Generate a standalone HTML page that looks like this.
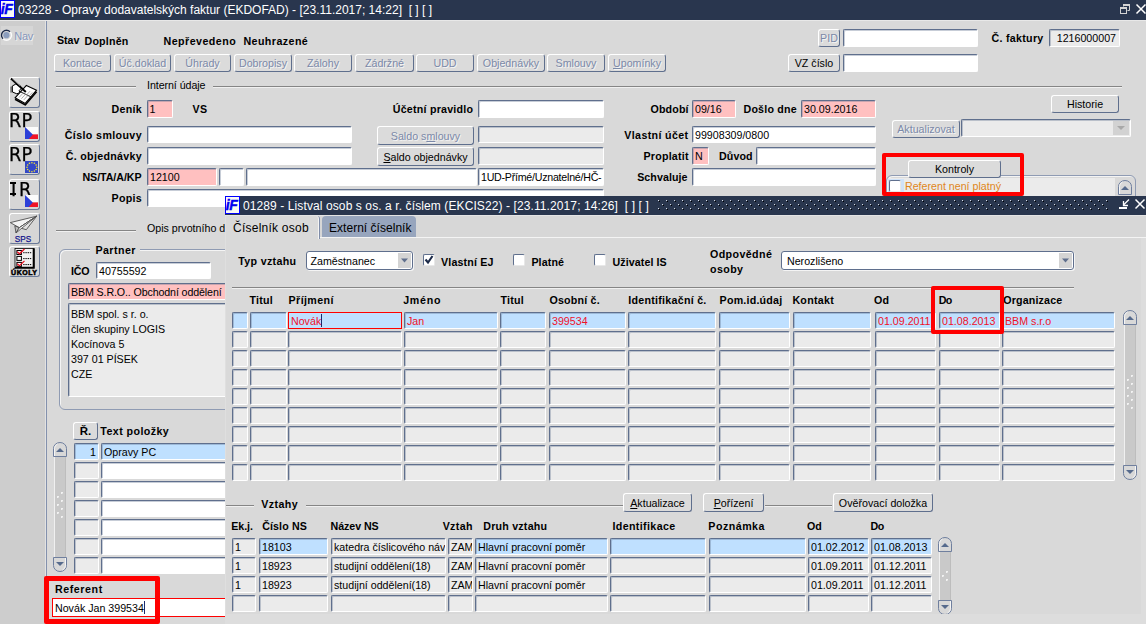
<!DOCTYPE html>
<html lang="cs"><head><meta charset="utf-8"><title>Opravy dodavatelských faktur</title><style>
html,body{margin:0;padding:0;}
body{width:1146px;height:624px;overflow:hidden;background:#d9d9d9;font-family:"Liberation Sans",sans-serif;font-size:10.67px;position:relative;}
.a,.f,.b,.t,.hl,.cb,.rr,.ib{position:absolute;box-sizing:border-box;}
.f{border:1px solid;border-color:#5f6f8d #fff #fff #5f6f8d;border-radius:2px;padding-left:2px;white-space:nowrap;overflow:hidden;font-size:10.67px;box-shadow:inset 1px 1px 0 rgba(95,111,141,0.35);}
.b{border:1px solid;border-color:#fff #5f6f8d #5f6f8d #fff;border-radius:3px;text-align:center;white-space:nowrap;font-size:10.67px;background:#dbdbdb;color:#000;overflow:hidden;}
.b.dis{color:#7b89a8;text-shadow:1px 1px 0 #f4f4f4;}
.t{white-space:nowrap;}
.ttl{color:#fff;font-size:12px;line-height:17px;}
.hl{height:2px;border-top:1px solid #858585;border-bottom:1px solid #f0f0f0;}
.cb{width:12px;height:12px;background:#fff;border:1px solid;border-color:#5f6f8d #e8e8e8 #e8e8e8 #5f6f8d;border-radius:2px;}
.rr{border:3px solid #ff0000;border-radius:2px;}
.ib{width:31px;height:31px;border:1px solid;border-color:#fff #6a7a98 #6a7a98 #fff;border-radius:3px;background:#d6d6d6;}
.big{font-family:"DejaVu Sans Condensed","DejaVu Sans","Liberation Sans",sans-serif;font-size:18.600px;line-height:20px;letter-spacing:0.2px;transform:scaleX(1.06);transform-origin:0 0;-webkit-text-stroke:0.250px #000;}
.cur{display:inline-block;width:1px;height:13px;background:#1a2a6c;vertical-align:-2px;}
u{text-decoration:underline;}
</style></head><body>
<div class="a" style="left:0px;top:0px;width:1146px;height:20px;background:#29364e;"></div>
<div class="a" style="left:0px;top:20px;width:1146px;height:1px;background:#e8e8e8;"></div>
<svg class="a" style="left:0;top:0" width="15" height="18" viewBox="0 0 15 18"><rect x="0.500" y="0.500" width="14" height="17" fill="#fafaf4" stroke="#0000ff"/><text x="0.800" y="14.300" font-family="Liberation Sans, sans-serif" font-style="italic" font-weight="bold" font-size="14" fill="#0000f0" stroke="#0000f0" stroke-width="0.400" letter-spacing="-0.500">iF</text></svg>
<div class="t ttl" style="left:18px;top:2px;">03228 - Opravy dodavatelských faktur (EKDOFAD) - [23.11.2017; 14:22]&nbsp; [ ] [ ]</div>
<svg class="a" style="left:1116px;top:0px" width="30" height="20" viewBox="0 0 30 20"><g fill="none" stroke="#d4d4d4" stroke-width="1"><path d="M7.500 6.500v-2h6v6h-2"/><path d="M7 5h7" stroke-width="2"/><rect x="4.500" y="7.500" width="6" height="6"/><path d="M4 8h7" stroke-width="2"/></g><path d="M20.500 4.500l9 9M29.500 4.500l-9 9" stroke="#fff" stroke-width="1.500"/></svg>
<div class="a" style="left:0px;top:21px;width:45px;height:603px;background:#cdcdcd;"></div>
<div class="a" style="left:45px;top:21px;width:1px;height:603px;background:#e2e2e2;"></div>
<div class="a" style="left:46px;top:21px;width:1px;height:603px;background:#8391ad;"></div>
<div class="a" style="left:1px;top:26px;width:32px;height:19px;background:#d6d6d6;"></div>
<svg class="a" style="left:0px;top:29px" width="14" height="13" viewBox="0 0 14 13"><circle cx="6.500" cy="6.300" r="5" fill="#d8d8d8" stroke="#fbfbfb" stroke-width="1.400"/><path d="M2.960 9.840A5 5 0 0 1 10.040 2.760" fill="none" stroke="#1c2a48" stroke-width="1.400"/><circle cx="6.400" cy="6.200" r="3.100" fill="#8b9dbd"/></svg>
<div class="t" style="left:14.3px;top:28.5px;font-size:11px;line-height:14px;color:#8797bb;text-shadow:1px 1px 0 #f0f0f0;letter-spacing:-0.320px;">Nav</div>
<div class="ib" style="left:9px;top:77px;"></div>
<div class="ib" style="left:9px;top:111px;"></div>
<div class="ib" style="left:9px;top:144px;"></div>
<div class="ib" style="left:9px;top:179px;"></div>
<div class="ib" style="left:9px;top:213px;"></div>
<div class="ib" style="left:9px;top:246px;"></div>
<svg class="a" style="left:9px;top:77px" width="31" height="31" viewBox="0 0 31 31"><path d="M6 22.300L16.200 27.900L27.600 14.700" fill="none" stroke="#000" stroke-width="1.600" stroke-linejoin="round"/><path d="M6 20.800L17.400 8.400L27.600 13.200L16.200 26.400z" fill="#fdfdfd" stroke="#000" stroke-width="1.100" stroke-linejoin="round"/><path d="M11.500 14.800L21.800 19.800" stroke="#000" stroke-width="0.900"/><path d="M10 20.500l4-4.300M12.400 21.700l4-4.300M14.800 22.900l4-4.300M17.500 18l3.500-3.800M19.800 19.200l3.500-3.800" stroke="#9a9a9a" stroke-width="0.800"/><rect x="1.200" y="9.600" width="2.200" height="6" fill="#808080"/><path d="M3.300 9L6.600 7.200L10.800 8.400L12.200 11.400L10.200 13.600L10.800 15.600L7.800 16.800L3.400 15z" fill="#fff" stroke="#000" stroke-width="1" stroke-linejoin="round"/><path d="M2 1.400L16.800 15" stroke="#000" stroke-width="2"/><path d="M3.200 1.600L11 8.800" stroke="#cfcfcf" stroke-width="0.600"/></svg>
<div class="t big" style="left:8.800px;top:111px;">RP</div>
<svg class="a" style="left:25px;top:127px" width="13" height="12" viewBox="0 0 13 12"><rect width="13" height="7.400" fill="#fcfcfc"/><rect y="7.400" width="13" height="4.600" fill="#f01428"/><path d="M0 0L7.800 7.400L3.800 12L0 12z" fill="#2c40d8"/></svg>
<div class="t big" style="left:8.800px;top:145px;">RP</div>
<svg class="a" style="left:25px;top:161px" width="13" height="12" viewBox="0 0 13 12"><rect width="13" height="12" fill="#3248c8"/><circle cx="11.80" cy="6.20" r="0.800" fill="#f6e22a"/><circle cx="11.14" cy="8.45" r="0.800" fill="#f6e22a"/><circle cx="9.35" cy="10.10" r="0.800" fill="#f6e22a"/><circle cx="6.90" cy="10.70" r="0.800" fill="#f6e22a"/><circle cx="4.45" cy="10.10" r="0.800" fill="#f6e22a"/><circle cx="2.66" cy="8.45" r="0.800" fill="#f6e22a"/><circle cx="2.00" cy="6.20" r="0.800" fill="#f6e22a"/><circle cx="2.66" cy="3.95" r="0.800" fill="#f6e22a"/><circle cx="4.45" cy="2.30" r="0.800" fill="#f6e22a"/><circle cx="6.90" cy="1.70" r="0.800" fill="#f6e22a"/><circle cx="9.35" cy="2.30" r="0.800" fill="#f6e22a"/><circle cx="11.14" cy="3.95" r="0.800" fill="#f6e22a"/></svg>
<div class="t big" style="left:8.800px;top:179.500px;"><span style="margin-left:1.800px;margin-right:2.600px;">I</span>R</div>
<svg class="a" style="left:25px;top:195px" width="13" height="12" viewBox="0 0 13 12"><rect width="13" height="7.400" fill="#fcfcfc"/><rect y="7.400" width="13" height="4.600" fill="#f01428"/><path d="M0 0L7.800 7.400L3.800 12L0 12z" fill="#2c40d8"/></svg>
<div class="a" style="left:10px;top:182px;width:6px;height:2px;background:#000;"></div>
<div class="a" style="left:10px;top:193px;width:6px;height:2px;background:#000;"></div>
<svg class="a" style="left:9px;top:213px" width="31" height="31" viewBox="0 0 31 31"><g stroke="#505050" stroke-width="0.900" stroke-linejoin="round"><path d="M1.300 9.600L27.600 3.200L10.300 14.700z" fill="#f4f4f4"/><path d="M27.600 3.200L17.300 16.700L10.300 14.700z" fill="#e2e2e2"/><path d="M5.800 12.800L7 19.900L10.300 14.700z" fill="#bdbdbd"/><path d="M27.600 3.200L7 19.900L10.300 14.700z" fill="#fff"/></g><text x="13.900" y="28.600" text-anchor="middle" font-family="Liberation Sans, sans-serif" font-size="8.200" fill="#15158c" stroke="#15158c" stroke-width="0.250">SPS</text></svg>
<svg class="a" style="left:9px;top:246px" width="31" height="31" viewBox="0 0 31 31"><rect x="6" y="2.500" width="19" height="19" fill="#f2f2f2" stroke="#000" stroke-width="0.800"/><path d="M24.700 2.500v19.300H6" fill="none" stroke="#000" stroke-width="2"/><g fill="#fff" stroke="#000" stroke-width="1"><rect x="7.900" y="4.500" width="4.500" height="4"/><rect x="7.900" y="10.400" width="4.500" height="4"/><rect x="7.900" y="16.400" width="4.500" height="4"/></g><g stroke="#000" stroke-width="1" stroke-dasharray="1.400 0.800"><path d="M14.200 6.700h8.500M14.200 12.600h8.500M14.200 18.600h8.500"/></g><path d="M8.200 5.800l2.300 2l5-4.800M8.200 17.700l2.300 2l5-4.800" stroke="#e81020" stroke-width="1.300" fill="none"/><text x="15.300" y="28.900" text-anchor="middle" font-family="Liberation Sans, sans-serif" font-weight="bold" font-size="7" letter-spacing="0.500" fill="#000" stroke="#000" stroke-width="0.500">ÚKOLY</text></svg>
<div class="t" style="left:57px;top:33.0px;font-size:10.67px;line-height:14px;color:#000;font-weight:bold;letter-spacing:-0.059px;">Stav</div>
<div class="t" style="left:84.5px;top:34.0px;font-size:10.67px;line-height:14px;color:#000;font-weight:bold;letter-spacing:0.190px;">Doplněn</div>
<div class="t" style="left:163.5px;top:34.0px;font-size:10.67px;line-height:14px;color:#000;font-weight:bold;letter-spacing:0.473px;">Nepřevedeno</div>
<div class="t" style="left:243.4px;top:34.0px;font-size:10.67px;line-height:14px;color:#000;font-weight:bold;letter-spacing:0.442px;">Neuhrazené</div>
<div class="b dis " style="left:54px;top:54px;width:57px;height:18px;line-height:16px;">Kontace</div>
<div class="b dis " style="left:114px;top:54px;width:57px;height:18px;line-height:16px;">Úč.doklad</div>
<div class="b dis " style="left:174px;top:54px;width:57px;height:18px;line-height:16px;">Úhrady</div>
<div class="b dis " style="left:234px;top:54px;width:58px;height:18px;line-height:16px;">Dobropisy</div>
<div class="b dis " style="left:294px;top:54px;width:58px;height:18px;line-height:16px;">Zálohy</div>
<div class="b dis " style="left:355px;top:54px;width:59px;height:18px;line-height:16px;">Zádržné</div>
<div class="b dis " style="left:416px;top:54px;width:58px;height:18px;line-height:16px;">UDD</div>
<div class="b dis " style="left:477px;top:54px;width:68px;height:18px;line-height:16px;">Objednávky</div>
<div class="b dis " style="left:547px;top:54px;width:58px;height:18px;line-height:16px;">Smlouvy</div>
<div class="b dis " style="left:608px;top:54px;width:58px;height:18px;line-height:16px;"><u>U</u>pomínky</div>
<div class="b dis " style="left:818px;top:29px;width:22px;height:18px;line-height:16px;">PID</div>
<div class="f " style="left:843px;top:29px;width:135px;height:18px;line-height:16px;background:#fff;color:#000;"></div>
<div class="t" style="left:991.5px;top:31.0px;font-size:10.67px;line-height:14px;color:#000;font-weight:bold;letter-spacing:0.289px;">Č. faktury</div>
<div class="f " style="left:1049px;top:29px;width:71px;height:18px;line-height:16px;background:#ebebeb;color:#000;text-align:right;padding-right:3px;">1216000007</div>
<div class="b  " style="left:788px;top:54px;width:52px;height:18px;line-height:16px;">VZ číslo</div>
<div class="f " style="left:843px;top:54px;width:135px;height:18px;line-height:16px;background:#fff;color:#000;"></div>
<div class="hl" style="left:56px;top:86px;width:80px;"></div>
<div class="t" style="left:147px;top:78.0px;font-size:10.67px;line-height:14px;color:#000;letter-spacing:-0.063px;">Interní údaje</div>
<div class="hl" style="left:213px;top:86px;width:909px;"></div>
<div class="t" style="right:1004.13090625px;top:102.0px;font-size:10.67px;line-height:14px;color:#000;font-weight:bold;letter-spacing:0.269px;">Deník</div>
<div class="f " style="left:146.5px;top:100px;width:26px;height:18px;line-height:16px;background:#ffc0c0;color:#000;">1</div>
<div class="t" style="left:192.4px;top:102.0px;font-size:10.67px;line-height:14px;color:#000;font-weight:bold;letter-spacing:0.433px;">VS</div>
<div class="t" style="right:672.7648375px;top:102.0px;font-size:10.67px;line-height:14px;color:#000;font-weight:bold;letter-spacing:0.235px;">Účetní pravidlo</div>
<div class="f " style="left:478px;top:100px;width:126px;height:18px;line-height:16px;background:#fff;color:#000;"></div>
<div class="t" style="right:457.35547916666667px;top:102.0px;font-size:10.67px;line-height:14px;color:#000;font-weight:bold;letter-spacing:0.145px;">Období</div>
<div class="f " style="left:692px;top:100px;width:44px;height:18px;line-height:16px;background:#ffc0c0;color:#000;">09/16</div>
<div class="t" style="left:743.5px;top:102.0px;font-size:10.67px;line-height:14px;color:#000;font-weight:bold;letter-spacing:0.203px;">Došlo dne</div>
<div class="f " style="left:801px;top:100px;width:75px;height:18px;line-height:16px;background:#ffc0c0;color:#000;">30.09.2016</div>
<div class="b  " style="left:1051px;top:95px;width:68px;height:18px;line-height:16px;">Historie</div>
<div class="t" style="right:1004.0182884615385px;top:128.0px;font-size:10.67px;line-height:14px;color:#000;font-weight:bold;letter-spacing:0.382px;">Číslo smlouvy</div>
<div class="f " style="left:147px;top:126px;width:205px;height:17px;line-height:17px;background:#fff;color:#000;"></div>
<div class="b dis " style="left:377px;top:126px;width:97px;height:19px;line-height:17px;line-height:19px;">Saldo s<u>m</u>louvy</div>
<div class="f " style="left:478px;top:126px;width:126px;height:17px;line-height:17px;background:#ebebeb;color:#000;"></div>
<div class="t" style="right:457.64878124999996px;top:128.0px;font-size:10.67px;line-height:14px;color:#000;font-weight:bold;letter-spacing:0.351px;">Vlastní účet</div>
<div class="f " style="left:692px;top:126px;width:184px;height:17px;line-height:17px;background:#fff;color:#000;">99908309/0800</div>
<div class="b dis " style="left:892px;top:120px;width:68px;height:18px;line-height:16px;">Aktualizovat</div>
<div class="f " style="left:961px;top:119px;width:170px;height:18px;line-height:16px;background:#ebebeb;color:#000;"></div>
<svg class="a" style="left:1113px;top:121px" width="16" height="14" viewBox="0 0 16 14"><rect width="16" height="14" fill="#d2d2d2"/><path d="M4 5h8l-4 4z" fill="#a8a8a8"/></svg>
<div class="t" style="right:1004.1027872596154px;top:149.0px;font-size:10.67px;line-height:14px;color:#000;font-weight:bold;letter-spacing:0.297px;">Č. objednávky</div>
<div class="f " style="left:147px;top:147px;width:205px;height:18px;line-height:16px;background:#fff;color:#000;"></div>
<div class="b  " style="left:377px;top:147px;width:97px;height:19px;line-height:17px;line-height:19px;"><u>S</u>aldo objednávky</div>
<div class="f " style="left:478px;top:147px;width:126px;height:18px;line-height:16px;background:#ebebeb;color:#000;"></div>
<div class="t" style="right:457.274734375px;top:149.0px;font-size:10.67px;line-height:14px;color:#000;font-weight:bold;letter-spacing:0.225px;">Proplatit</div>
<div class="f " style="left:692px;top:147px;width:17px;height:18px;line-height:16px;background:#ffc0c0;color:#000;">N</div>
<div class="t" style="left:719.1px;top:149.0px;font-size:10.67px;line-height:14px;color:#000;font-weight:bold;letter-spacing:0.062px;">Důvod</div>
<div class="f " style="left:756px;top:147px;width:120px;height:18px;line-height:16px;background:#fff;color:#000;"></div>
<div class="t" style="right:1004.447621875px;top:170.0px;font-size:10.67px;line-height:14px;color:#000;font-weight:bold;letter-spacing:-0.048px;">NS/TA/A/KP</div>
<div class="f " style="left:147px;top:168px;width:70px;height:18px;line-height:16px;background:#ffc0c0;color:#000;">12100</div>
<div class="f " style="left:219px;top:168px;width:25px;height:18px;line-height:16px;background:#fff;color:#000;"></div>
<div class="f " style="left:246px;top:168px;width:231px;height:18px;line-height:16px;background:#fff;color:#000;"></div>
<div class="f " style="left:478px;top:168px;width:126px;height:18px;line-height:16px;background:#fff;color:#000;letter-spacing:-0.250px;">1UD-Přímé/Uznatelné/HČ-</div>
<div class="t" style="right:458.4239513888889px;top:170.0px;font-size:10.67px;line-height:14px;color:#000;font-weight:bold;letter-spacing:0.076px;">Schvaluje</div>
<div class="f " style="left:692px;top:168px;width:184px;height:18px;line-height:16px;background:#fff;color:#000;"></div>
<div class="t" style="right:1004.129996875px;top:191.0px;font-size:10.67px;line-height:14px;color:#000;font-weight:bold;letter-spacing:0.270px;">Popis</div>
<div class="f " style="left:147px;top:189px;width:457px;height:18px;line-height:16px;background:#fff;color:#000;"></div>
<div class="a" style="left:886px;top:175px;width:250px;height:40px;border:1px solid #8f9bb3;border-radius:6px;box-sizing:border-box;box-shadow:inset 1px 1px 0 #f4f4f4;"></div>
<div class="a" style="left:888px;top:178px;width:227px;height:20px;background:#ebebeb;"></div>
<div class="b  " style="left:908px;top:160px;width:93px;height:18px;line-height:16px;">Kontroly</div>
<div class="a" style="left:888px;top:179px;width:16px;height:15px;background:#cfe2f8;"></div>
<div class="cb" style="left:889px;top:180px;"></div>
<div class="t" style="left:905px;top:179.0px;font-size:10.67px;line-height:14px;color:#e0861a;">Referent není platný</div>
<svg class="a" style="left:1118px;top:180px" width="14" height="15" viewBox="0 0 14 15"><path d="M0.500 14.500V6.500a6.500 6 0 0 1 13 0V14.500z" fill="#d8d8d8" stroke="#6f7f9e" stroke-width="1"/><path d="M1.500 14V6.500a5.500 5 0 0 1 3 -4.500" fill="none" stroke="#f6f6f6" stroke-width="1"/><path d="M3 10h8l-4-4z" fill="#566a8c"/></svg>
<div class="rr" style="left:882px;top:153px;width:142px;height:43px;border-width:4px;z-index:5;"></div>
<div class="hl" style="left:56px;top:230px;width:80px;"></div>
<div class="t" style="left:147px;top:221.0px;font-size:10.67px;line-height:14px;color:#000;">Opis prvotního dokladu</div>
<div class="a" style="left:59px;top:249px;width:300px;height:161px;border:1px solid #8f9bb3;border-radius:6px;box-sizing:border-box;box-shadow:inset 1px 1px 0 #f4f4f4;"></div>
<div class="a" style="left:90px;top:244px;width:50px;height:12px;background:#d9d9d9;"></div>
<div class="t" style="left:95.4px;top:243.0px;font-size:10.67px;line-height:14px;color:#000;font-weight:bold;letter-spacing:0.463px;">Partner</div>
<div class="t" style="left:71px;top:264.0px;font-size:10.67px;line-height:14px;color:#000;font-weight:bold;letter-spacing:-0.190px;">IČO</div>
<div class="f " style="left:96px;top:262px;width:115px;height:17px;line-height:17px;background:#fff;color:#000;">40755592</div>
<div class="f " style="left:68px;top:283px;width:200px;height:17px;line-height:17px;background:#ffc0c0;color:#000;letter-spacing:-0.120px;">BBM S.R.O.. Obchodní oddělení</div>
<div class="f" style="left:68px;top:303px;width:200px;height:94px;background:#ebebeb;line-height:15px;padding-top:3px;white-space:pre;">BBM spol. s r. o.
člen skupiny LOGIS
Kocínova 5
397 01 PÍSEK
CZE</div>
<div class="b  " style="left:73px;top:422px;width:25px;height:18px;line-height:16px;font-weight:bold;font-size:11.500px;line-height:17px;">Ř.</div>
<div class="t" style="left:100.3px;top:424.0px;font-size:10.67px;line-height:14px;color:#000;font-weight:bold;letter-spacing:0.431px;">Text položky</div>
<div class="f " style="left:74px;top:443px;width:25px;height:17px;line-height:17px;background:#bfe0ff;color:#000;text-align:right;padding-right:2px;">1</div>
<div class="f " style="left:101px;top:443px;width:150px;height:17px;line-height:17px;background:#bfe0ff;color:#000;">Opravy PC</div>
<div class="f " style="left:74px;top:462px;width:25px;height:17px;line-height:17px;background:#ebebeb;color:#000;text-align:right;padding-right:2px;"></div>
<div class="f " style="left:101px;top:462px;width:150px;height:17px;line-height:17px;background:#fff;color:#000;"></div>
<div class="f " style="left:74px;top:481px;width:25px;height:17px;line-height:17px;background:#ebebeb;color:#000;text-align:right;padding-right:2px;"></div>
<div class="f " style="left:101px;top:481px;width:150px;height:17px;line-height:17px;background:#fff;color:#000;"></div>
<div class="f " style="left:74px;top:500px;width:25px;height:17px;line-height:17px;background:#ebebeb;color:#000;text-align:right;padding-right:2px;"></div>
<div class="f " style="left:101px;top:500px;width:150px;height:17px;line-height:17px;background:#fff;color:#000;"></div>
<div class="f " style="left:74px;top:519px;width:25px;height:17px;line-height:17px;background:#ebebeb;color:#000;text-align:right;padding-right:2px;"></div>
<div class="f " style="left:101px;top:519px;width:150px;height:17px;line-height:17px;background:#fff;color:#000;"></div>
<div class="f " style="left:74px;top:538px;width:25px;height:17px;line-height:17px;background:#ebebeb;color:#000;text-align:right;padding-right:2px;"></div>
<div class="f " style="left:101px;top:538px;width:150px;height:17px;line-height:17px;background:#fff;color:#000;"></div>
<div class="f " style="left:74px;top:557px;width:25px;height:17px;line-height:17px;background:#ebebeb;color:#000;text-align:right;padding-right:2px;"></div>
<div class="f " style="left:101px;top:557px;width:150px;height:17px;line-height:17px;background:#fff;color:#000;"></div>
<div class="a" style="left:54px;top:450px;width:12px;height:114px;background:#c9c9c9;border-left:1px solid #f0f0f0;border-right:1px solid #bdbdbd;box-sizing:border-box;"></div>
<svg class="a" style="left:53px;top:442px" width="14" height="15" viewBox="0 0 14 15"><path d="M0.500 14.500V6.500a6.500 6 0 0 1 13 0V14.500z" fill="#d8d8d8" stroke="#6f7f9e" stroke-width="1"/><path d="M1.500 14V6.500a5.500 5 0 0 1 3 -4.500" fill="none" stroke="#f6f6f6" stroke-width="1"/><path d="M3 10h8l-4-4z" fill="#566a8c"/></svg>
<svg class="a" style="left:53px;top:557px" width="14" height="15" viewBox="0 0 14 15"><path d="M0.500 14.500V6.500a6.500 6 0 0 1 13 0V14.500z" fill="#d8d8d8" stroke="#6f7f9e" stroke-width="1" transform="rotate(180 7 7.500)"/><path d="M1.500 14V6.500a5.500 5 0 0 1 3 -4.500" fill="none" stroke="#f6f6f6" stroke-width="1" transform="rotate(180 7 7.500)"/><path d="M3 5h8l-4 4z" fill="#566a8c"/></svg>
<svg class="a" style="left:53px;top:492px" width="14" height="28"><rect x="8" y="0" width="2" height="2" fill="#f2f2f2"/><rect x="9" y="1" width="1" height="1" fill="#e0e0e0"/><rect x="4" y="4" width="2" height="2" fill="#f2f2f2"/><rect x="5" y="5" width="1" height="1" fill="#e0e0e0"/><rect x="8" y="8" width="2" height="2" fill="#f2f2f2"/><rect x="9" y="9" width="1" height="1" fill="#e0e0e0"/><rect x="4" y="12" width="2" height="2" fill="#f2f2f2"/><rect x="5" y="13" width="1" height="1" fill="#e0e0e0"/><rect x="8" y="16" width="2" height="2" fill="#f2f2f2"/><rect x="9" y="17" width="1" height="1" fill="#e0e0e0"/><rect x="4" y="20" width="2" height="2" fill="#f2f2f2"/><rect x="5" y="21" width="1" height="1" fill="#e0e0e0"/><rect x="8" y="24" width="2" height="2" fill="#f2f2f2"/><rect x="9" y="25" width="1" height="1" fill="#e0e0e0"/></svg>
<div class="t" style="left:55px;top:582.0px;font-size:10.67px;line-height:14px;color:#000;font-weight:bold;letter-spacing:0.565px;">Referent</div>
<div class="f" style="left:52px;top:598px;width:200px;height:19px;line-height:19px;background:#fff;border:1px solid #ff0000;border-radius:0;box-shadow:none;">Novák Jan 399534<span class="cur"></span></div>
<div class="rr" style="left:44px;top:576px;width:116px;height:48px;border-width:5px;"></div>
<div class="a" id="w2" style="left:225px;top:196px;width:921px;height:428px;background:#d9d9d9;overflow:hidden;">
<div class="a" style="left:-225px;top:-196px;width:1146px;height:624px;">
<div class="a" style="left:225px;top:195px;width:921px;height:1px;background:#e2e2e2;"></div>
<div class="a" style="left:225px;top:196px;width:921px;height:19px;background:#29364e;"></div>
<div class="a" style="left:225px;top:215px;width:921px;height:1px;background:#e4e4e4;"></div>
<svg class="a" style="left:225px;top:196px" width="15" height="18" viewBox="0 0 15 18"><rect x="0.500" y="0.500" width="14" height="17" fill="#fafaf4" stroke="#0000ff"/><text x="0.800" y="14.300" font-family="Liberation Sans, sans-serif" font-style="italic" font-weight="bold" font-size="14" fill="#0000f0" stroke="#0000f0" stroke-width="0.400" letter-spacing="-0.500">iF</text></svg>
<div class="t ttl" style="left:243px;top:198px;letter-spacing:0.1px;">01289 - Listval osob s os. a r. číslem (EKCIS22) - [23.11.2017; 14:26]&nbsp; [ ] [ ]</div>
<svg class="a" style="left:658px;top:200px" width="450" height="10"><defs><pattern id="dp" width="8" height="8" patternUnits="userSpaceOnUse"><rect x="0" y="0" width="1" height="1" fill="#d8dce4"/><rect x="1" y="1" width="1" height="1" fill="#000"/><rect x="4" y="4" width="1" height="1" fill="#d8dce4"/><rect x="5" y="5" width="1" height="1" fill="#000"/></pattern></defs><rect width="450" height="10" fill="url(#dp)"/></svg>
<svg class="a" style="left:1116px;top:196px" width="30" height="19" viewBox="0 0 30 19"><g stroke="#fff" fill="none"><path d="M3 12h8" stroke-width="2"/><path d="M13 3.500L7.500 9" stroke-width="1.300"/><path d="M7.500 5v4.500h4.500" stroke-width="1.300"/><path d="M19.500 3.500l9 9M28.500 3.500l-9 9" stroke-width="1.500"/></g></svg>
<div class="a" style="left:225px;top:216px;width:921px;height:22px;background:#d7d7d7;"></div>
<div class="a" style="left:319px;top:237px;width:827px;height:1px;background:#f4f4f4;"></div>
<div class="a" style="left:225px;top:216px;width:95px;height:23px;background:#d9d9d9;border-right:1px solid #7f8ca8;box-shadow:inset -1px 0 0 #f4f4f4;border-radius:0 3px 0 0;"></div>
<div class="t" style="left:233px;top:220px;font-size:12px;line-height:17px;letter-spacing:0.24px;">Číselník osob</div>
<div class="a" style="left:322px;top:216px;width:94px;height:21px;background:#97a5bd;border-radius:4px 4px 0 0;"></div>
<div class="t" style="left:329px;top:220px;font-size:12px;line-height:17px;letter-spacing:0.03px;">Externí číselník</div>
<div class="a" style="left:225px;top:216px;width:1px;height:408px;background:#dfdfdf;"></div>
<div class="a" style="left:1141px;top:238px;width:5px;height:386px;background:#dddddd;"></div>
<div class="t" style="left:238.3px;top:254.0px;font-size:10.67px;line-height:14px;color:#000;font-weight:bold;letter-spacing:0.317px;">Typ vztahu</div>
<div class="f " style="left:306px;top:251px;width:107px;height:19px;line-height:17px;background:#fff;color:#000;border-radius:3px;border-color:#5f6f8d;padding-left:3.5px;padding-top:1px;box-shadow:1px 1px 0 #f4f4f4;">Zaměstnanec</div>
<svg class="a" style="left:398px;top:253px" width="13" height="15" viewBox="0 0 13 15"><rect width="13" height="15" fill="#d4d4d4"/><path d="M3 5.5h7l-3.500 4z" fill="#5f6f8d"/></svg>
<div class="cb" style="left:423px;top:254px;"><svg width="10" height="10" viewBox="0 0 10 10" style="position:absolute;left:0;top:0"><path d="M1.500 4.500l2.500 3l4.500-6.500" stroke="#1c2a48" stroke-width="2.100" fill="none"/></svg></div>
<div class="t" style="left:441px;top:255.0px;font-size:10.67px;line-height:14px;color:#000;font-weight:bold;letter-spacing:0.160px;">Vlastní EJ</div>
<div class="cb" style="left:513px;top:254px;"></div>
<div class="t" style="left:531.4px;top:255.0px;font-size:10.67px;line-height:14px;color:#000;font-weight:bold;letter-spacing:0.113px;">Platné</div>
<div class="cb" style="left:594px;top:254px;"></div>
<div class="t" style="left:612.5px;top:255.0px;font-size:10.67px;line-height:14px;color:#000;font-weight:bold;letter-spacing:0.085px;">Uživatel IS</div>
<div class="t" style="left:710px;top:247.0px;font-size:10.67px;line-height:14px;color:#000;font-weight:bold;letter-spacing:0.401px;">Odpovědné</div>
<div class="t" style="left:710px;top:262.0px;font-size:10.67px;line-height:14px;color:#000;font-weight:bold;letter-spacing:0.416px;">osoby</div>
<div class="f " style="left:781px;top:251px;width:293px;height:19px;line-height:17px;background:#fff;color:#000;border-radius:3px;border-color:#5f6f8d;padding-left:5px;padding-top:1px;box-shadow:1px 1px 0 #f4f4f4;">Nerozlišeno</div>
<svg class="a" style="left:1059px;top:253px" width="13" height="15" viewBox="0 0 13 15"><rect width="13" height="15" fill="#d4d4d4"/><path d="M3 5.5h7l-3.500 4z" fill="#5f6f8d"/></svg>
<div class="hl" style="left:232px;top:287px;width:842px;"></div>
<div class="t" style="left:249.6px;top:293.0px;font-size:10.67px;line-height:14px;color:#000;font-weight:bold;letter-spacing:0.195px;">Titul</div>
<div class="t" style="left:288.6px;top:293.0px;font-size:10.67px;line-height:14px;color:#000;font-weight:bold;letter-spacing:0.400px;">Příjmení</div>
<div class="t" style="left:403.2px;top:293.0px;font-size:10.67px;line-height:14px;color:#000;font-weight:bold;letter-spacing:0.722px;">Jméno</div>
<div class="t" style="left:500.5px;top:293.0px;font-size:10.67px;line-height:14px;color:#000;font-weight:bold;letter-spacing:0.235px;">Titul</div>
<div class="t" style="left:549.4px;top:293.0px;font-size:10.67px;line-height:14px;color:#000;font-weight:bold;letter-spacing:0.210px;">Osobní č.</div>
<div class="t" style="left:628.2px;top:293.0px;font-size:10.67px;line-height:14px;color:#000;font-weight:bold;letter-spacing:0.274px;">Identifikační č.</div>
<div class="t" style="left:719.6px;top:293.0px;font-size:10.67px;line-height:14px;color:#000;font-weight:bold;letter-spacing:0.212px;">Pom.id.údaj</div>
<div class="t" style="left:792.4px;top:293.0px;font-size:10.67px;line-height:14px;color:#000;font-weight:bold;letter-spacing:0.270px;">Kontakt</div>
<div class="t" style="left:874px;top:293.0px;font-size:10.67px;line-height:14px;color:#000;font-weight:bold;letter-spacing:0.092px;">Od</div>
<div class="t" style="left:938.7px;top:293.0px;font-size:10.67px;line-height:14px;color:#000;font-weight:bold;letter-spacing:-0.561px;">Do</div>
<div class="t" style="left:1003.2px;top:293.0px;font-size:10.67px;line-height:14px;color:#000;font-weight:bold;letter-spacing:0.168px;">Organizace</div>
<div class="f " style="left:232px;top:312px;width:16px;height:17px;line-height:17px;background:#bfe0ff;color:#f01028;"></div>
<div class="f " style="left:250px;top:312px;width:37px;height:17px;line-height:17px;background:#bfe0ff;color:#f01028;"></div>
<div class="f" style="left:288px;top:312px;width:114px;height:17px;line-height:17px;background:#bfe0ff;color:#f01028;border:1px solid #ff0000;box-shadow:none;border-radius:0;">Novák<span class="cur"></span></div>
<div class="f " style="left:404px;top:312px;width:94px;height:17px;line-height:17px;background:#bfe0ff;color:#f01028;">Jan</div>
<div class="f " style="left:500px;top:312px;width:46px;height:17px;line-height:17px;background:#bfe0ff;color:#f01028;"></div>
<div class="f " style="left:549px;top:312px;width:77px;height:17px;line-height:17px;background:#bfe0ff;color:#f01028;">399534</div>
<div class="f " style="left:628px;top:312px;width:88px;height:17px;line-height:17px;background:#bfe0ff;color:#f01028;"></div>
<div class="f " style="left:719px;top:312px;width:71px;height:17px;line-height:17px;background:#bfe0ff;color:#f01028;"></div>
<div class="f " style="left:793px;top:312px;width:78px;height:17px;line-height:17px;background:#bfe0ff;color:#f01028;"></div>
<div class="f " style="left:875px;top:312px;width:61px;height:17px;line-height:17px;background:#bfe0ff;color:#f01028;">01.09.2011</div>
<div class="f " style="left:939px;top:312px;width:61px;height:17px;line-height:17px;background:#bfe0ff;color:#f01028;">01.08.2013</div>
<div class="f " style="left:1002px;top:312px;width:113px;height:17px;line-height:17px;background:#bfe0ff;color:#f01028;">BBM s.r.o</div>
<div class="f " style="left:232px;top:331px;width:16px;height:17px;line-height:17px;background:#ebebeb;color:#000;"></div>
<div class="f " style="left:250px;top:331px;width:37px;height:17px;line-height:17px;background:#ebebeb;color:#000;"></div>
<div class="f " style="left:288px;top:331px;width:114px;height:17px;line-height:17px;background:#ebebeb;color:#000;"></div>
<div class="f " style="left:404px;top:331px;width:94px;height:17px;line-height:17px;background:#ebebeb;color:#000;"></div>
<div class="f " style="left:500px;top:331px;width:46px;height:17px;line-height:17px;background:#ebebeb;color:#000;"></div>
<div class="f " style="left:549px;top:331px;width:77px;height:17px;line-height:17px;background:#ebebeb;color:#000;"></div>
<div class="f " style="left:628px;top:331px;width:88px;height:17px;line-height:17px;background:#ebebeb;color:#000;"></div>
<div class="f " style="left:719px;top:331px;width:71px;height:17px;line-height:17px;background:#ebebeb;color:#000;"></div>
<div class="f " style="left:793px;top:331px;width:78px;height:17px;line-height:17px;background:#ebebeb;color:#000;"></div>
<div class="f " style="left:875px;top:331px;width:61px;height:17px;line-height:17px;background:#ebebeb;color:#000;"></div>
<div class="f " style="left:939px;top:331px;width:61px;height:17px;line-height:17px;background:#ebebeb;color:#000;"></div>
<div class="f " style="left:1002px;top:331px;width:113px;height:17px;line-height:17px;background:#ebebeb;color:#000;"></div>
<div class="f " style="left:232px;top:350px;width:16px;height:17px;line-height:17px;background:#ebebeb;color:#000;"></div>
<div class="f " style="left:250px;top:350px;width:37px;height:17px;line-height:17px;background:#ebebeb;color:#000;"></div>
<div class="f " style="left:288px;top:350px;width:114px;height:17px;line-height:17px;background:#ebebeb;color:#000;"></div>
<div class="f " style="left:404px;top:350px;width:94px;height:17px;line-height:17px;background:#ebebeb;color:#000;"></div>
<div class="f " style="left:500px;top:350px;width:46px;height:17px;line-height:17px;background:#ebebeb;color:#000;"></div>
<div class="f " style="left:549px;top:350px;width:77px;height:17px;line-height:17px;background:#ebebeb;color:#000;"></div>
<div class="f " style="left:628px;top:350px;width:88px;height:17px;line-height:17px;background:#ebebeb;color:#000;"></div>
<div class="f " style="left:719px;top:350px;width:71px;height:17px;line-height:17px;background:#ebebeb;color:#000;"></div>
<div class="f " style="left:793px;top:350px;width:78px;height:17px;line-height:17px;background:#ebebeb;color:#000;"></div>
<div class="f " style="left:875px;top:350px;width:61px;height:17px;line-height:17px;background:#ebebeb;color:#000;"></div>
<div class="f " style="left:939px;top:350px;width:61px;height:17px;line-height:17px;background:#ebebeb;color:#000;"></div>
<div class="f " style="left:1002px;top:350px;width:113px;height:17px;line-height:17px;background:#ebebeb;color:#000;"></div>
<div class="f " style="left:232px;top:369px;width:16px;height:17px;line-height:17px;background:#ebebeb;color:#000;"></div>
<div class="f " style="left:250px;top:369px;width:37px;height:17px;line-height:17px;background:#ebebeb;color:#000;"></div>
<div class="f " style="left:288px;top:369px;width:114px;height:17px;line-height:17px;background:#ebebeb;color:#000;"></div>
<div class="f " style="left:404px;top:369px;width:94px;height:17px;line-height:17px;background:#ebebeb;color:#000;"></div>
<div class="f " style="left:500px;top:369px;width:46px;height:17px;line-height:17px;background:#ebebeb;color:#000;"></div>
<div class="f " style="left:549px;top:369px;width:77px;height:17px;line-height:17px;background:#ebebeb;color:#000;"></div>
<div class="f " style="left:628px;top:369px;width:88px;height:17px;line-height:17px;background:#ebebeb;color:#000;"></div>
<div class="f " style="left:719px;top:369px;width:71px;height:17px;line-height:17px;background:#ebebeb;color:#000;"></div>
<div class="f " style="left:793px;top:369px;width:78px;height:17px;line-height:17px;background:#ebebeb;color:#000;"></div>
<div class="f " style="left:875px;top:369px;width:61px;height:17px;line-height:17px;background:#ebebeb;color:#000;"></div>
<div class="f " style="left:939px;top:369px;width:61px;height:17px;line-height:17px;background:#ebebeb;color:#000;"></div>
<div class="f " style="left:1002px;top:369px;width:113px;height:17px;line-height:17px;background:#ebebeb;color:#000;"></div>
<div class="f " style="left:232px;top:388px;width:16px;height:17px;line-height:17px;background:#ebebeb;color:#000;"></div>
<div class="f " style="left:250px;top:388px;width:37px;height:17px;line-height:17px;background:#ebebeb;color:#000;"></div>
<div class="f " style="left:288px;top:388px;width:114px;height:17px;line-height:17px;background:#ebebeb;color:#000;"></div>
<div class="f " style="left:404px;top:388px;width:94px;height:17px;line-height:17px;background:#ebebeb;color:#000;"></div>
<div class="f " style="left:500px;top:388px;width:46px;height:17px;line-height:17px;background:#ebebeb;color:#000;"></div>
<div class="f " style="left:549px;top:388px;width:77px;height:17px;line-height:17px;background:#ebebeb;color:#000;"></div>
<div class="f " style="left:628px;top:388px;width:88px;height:17px;line-height:17px;background:#ebebeb;color:#000;"></div>
<div class="f " style="left:719px;top:388px;width:71px;height:17px;line-height:17px;background:#ebebeb;color:#000;"></div>
<div class="f " style="left:793px;top:388px;width:78px;height:17px;line-height:17px;background:#ebebeb;color:#000;"></div>
<div class="f " style="left:875px;top:388px;width:61px;height:17px;line-height:17px;background:#ebebeb;color:#000;"></div>
<div class="f " style="left:939px;top:388px;width:61px;height:17px;line-height:17px;background:#ebebeb;color:#000;"></div>
<div class="f " style="left:1002px;top:388px;width:113px;height:17px;line-height:17px;background:#ebebeb;color:#000;"></div>
<div class="f " style="left:232px;top:407px;width:16px;height:17px;line-height:17px;background:#ebebeb;color:#000;"></div>
<div class="f " style="left:250px;top:407px;width:37px;height:17px;line-height:17px;background:#ebebeb;color:#000;"></div>
<div class="f " style="left:288px;top:407px;width:114px;height:17px;line-height:17px;background:#ebebeb;color:#000;"></div>
<div class="f " style="left:404px;top:407px;width:94px;height:17px;line-height:17px;background:#ebebeb;color:#000;"></div>
<div class="f " style="left:500px;top:407px;width:46px;height:17px;line-height:17px;background:#ebebeb;color:#000;"></div>
<div class="f " style="left:549px;top:407px;width:77px;height:17px;line-height:17px;background:#ebebeb;color:#000;"></div>
<div class="f " style="left:628px;top:407px;width:88px;height:17px;line-height:17px;background:#ebebeb;color:#000;"></div>
<div class="f " style="left:719px;top:407px;width:71px;height:17px;line-height:17px;background:#ebebeb;color:#000;"></div>
<div class="f " style="left:793px;top:407px;width:78px;height:17px;line-height:17px;background:#ebebeb;color:#000;"></div>
<div class="f " style="left:875px;top:407px;width:61px;height:17px;line-height:17px;background:#ebebeb;color:#000;"></div>
<div class="f " style="left:939px;top:407px;width:61px;height:17px;line-height:17px;background:#ebebeb;color:#000;"></div>
<div class="f " style="left:1002px;top:407px;width:113px;height:17px;line-height:17px;background:#ebebeb;color:#000;"></div>
<div class="f " style="left:232px;top:426px;width:16px;height:17px;line-height:17px;background:#ebebeb;color:#000;"></div>
<div class="f " style="left:250px;top:426px;width:37px;height:17px;line-height:17px;background:#ebebeb;color:#000;"></div>
<div class="f " style="left:288px;top:426px;width:114px;height:17px;line-height:17px;background:#ebebeb;color:#000;"></div>
<div class="f " style="left:404px;top:426px;width:94px;height:17px;line-height:17px;background:#ebebeb;color:#000;"></div>
<div class="f " style="left:500px;top:426px;width:46px;height:17px;line-height:17px;background:#ebebeb;color:#000;"></div>
<div class="f " style="left:549px;top:426px;width:77px;height:17px;line-height:17px;background:#ebebeb;color:#000;"></div>
<div class="f " style="left:628px;top:426px;width:88px;height:17px;line-height:17px;background:#ebebeb;color:#000;"></div>
<div class="f " style="left:719px;top:426px;width:71px;height:17px;line-height:17px;background:#ebebeb;color:#000;"></div>
<div class="f " style="left:793px;top:426px;width:78px;height:17px;line-height:17px;background:#ebebeb;color:#000;"></div>
<div class="f " style="left:875px;top:426px;width:61px;height:17px;line-height:17px;background:#ebebeb;color:#000;"></div>
<div class="f " style="left:939px;top:426px;width:61px;height:17px;line-height:17px;background:#ebebeb;color:#000;"></div>
<div class="f " style="left:1002px;top:426px;width:113px;height:17px;line-height:17px;background:#ebebeb;color:#000;"></div>
<div class="f " style="left:232px;top:445px;width:16px;height:17px;line-height:17px;background:#ebebeb;color:#000;"></div>
<div class="f " style="left:250px;top:445px;width:37px;height:17px;line-height:17px;background:#ebebeb;color:#000;"></div>
<div class="f " style="left:288px;top:445px;width:114px;height:17px;line-height:17px;background:#ebebeb;color:#000;"></div>
<div class="f " style="left:404px;top:445px;width:94px;height:17px;line-height:17px;background:#ebebeb;color:#000;"></div>
<div class="f " style="left:500px;top:445px;width:46px;height:17px;line-height:17px;background:#ebebeb;color:#000;"></div>
<div class="f " style="left:549px;top:445px;width:77px;height:17px;line-height:17px;background:#ebebeb;color:#000;"></div>
<div class="f " style="left:628px;top:445px;width:88px;height:17px;line-height:17px;background:#ebebeb;color:#000;"></div>
<div class="f " style="left:719px;top:445px;width:71px;height:17px;line-height:17px;background:#ebebeb;color:#000;"></div>
<div class="f " style="left:793px;top:445px;width:78px;height:17px;line-height:17px;background:#ebebeb;color:#000;"></div>
<div class="f " style="left:875px;top:445px;width:61px;height:17px;line-height:17px;background:#ebebeb;color:#000;"></div>
<div class="f " style="left:939px;top:445px;width:61px;height:17px;line-height:17px;background:#ebebeb;color:#000;"></div>
<div class="f " style="left:1002px;top:445px;width:113px;height:17px;line-height:17px;background:#ebebeb;color:#000;"></div>
<div class="f " style="left:232px;top:464px;width:16px;height:17px;line-height:17px;background:#ebebeb;color:#000;"></div>
<div class="f " style="left:250px;top:464px;width:37px;height:17px;line-height:17px;background:#ebebeb;color:#000;"></div>
<div class="f " style="left:288px;top:464px;width:114px;height:17px;line-height:17px;background:#ebebeb;color:#000;"></div>
<div class="f " style="left:404px;top:464px;width:94px;height:17px;line-height:17px;background:#ebebeb;color:#000;"></div>
<div class="f " style="left:500px;top:464px;width:46px;height:17px;line-height:17px;background:#ebebeb;color:#000;"></div>
<div class="f " style="left:549px;top:464px;width:77px;height:17px;line-height:17px;background:#ebebeb;color:#000;"></div>
<div class="f " style="left:628px;top:464px;width:88px;height:17px;line-height:17px;background:#ebebeb;color:#000;"></div>
<div class="f " style="left:719px;top:464px;width:71px;height:17px;line-height:17px;background:#ebebeb;color:#000;"></div>
<div class="f " style="left:793px;top:464px;width:78px;height:17px;line-height:17px;background:#ebebeb;color:#000;"></div>
<div class="f " style="left:875px;top:464px;width:61px;height:17px;line-height:17px;background:#ebebeb;color:#000;"></div>
<div class="f " style="left:939px;top:464px;width:61px;height:17px;line-height:17px;background:#ebebeb;color:#000;"></div>
<div class="f " style="left:1002px;top:464px;width:113px;height:17px;line-height:17px;background:#ebebeb;color:#000;"></div>
<div class="a" style="left:1124px;top:318px;width:12px;height:154px;background:#c9c9c9;border-left:1px solid #f0f0f0;border-right:1px solid #bdbdbd;box-sizing:border-box;"></div>
<svg class="a" style="left:1123px;top:310px" width="14" height="15" viewBox="0 0 14 15"><path d="M0.500 14.500V6.500a6.500 6 0 0 1 13 0V14.500z" fill="#d8d8d8" stroke="#6f7f9e" stroke-width="1"/><path d="M1.500 14V6.500a5.500 5 0 0 1 3 -4.500" fill="none" stroke="#f6f6f6" stroke-width="1"/><path d="M3 10h8l-4-4z" fill="#566a8c"/></svg>
<svg class="a" style="left:1123px;top:465px" width="14" height="15" viewBox="0 0 14 15"><path d="M0.500 14.500V6.500a6.500 6 0 0 1 13 0V14.500z" fill="#d8d8d8" stroke="#6f7f9e" stroke-width="1" transform="rotate(180 7 7.500)"/><path d="M1.500 14V6.500a5.500 5 0 0 1 3 -4.500" fill="none" stroke="#f6f6f6" stroke-width="1" transform="rotate(180 7 7.500)"/><path d="M3 5h8l-4 4z" fill="#566a8c"/></svg>
<svg class="a" style="left:1123px;top:375px" width="14" height="36"><rect x="8" y="0" width="2" height="2" fill="#f2f2f2"/><rect x="9" y="1" width="1" height="1" fill="#e0e0e0"/><rect x="4" y="4" width="2" height="2" fill="#f2f2f2"/><rect x="5" y="5" width="1" height="1" fill="#e0e0e0"/><rect x="8" y="8" width="2" height="2" fill="#f2f2f2"/><rect x="9" y="9" width="1" height="1" fill="#e0e0e0"/><rect x="4" y="12" width="2" height="2" fill="#f2f2f2"/><rect x="5" y="13" width="1" height="1" fill="#e0e0e0"/><rect x="8" y="16" width="2" height="2" fill="#f2f2f2"/><rect x="9" y="17" width="1" height="1" fill="#e0e0e0"/><rect x="4" y="20" width="2" height="2" fill="#f2f2f2"/><rect x="5" y="21" width="1" height="1" fill="#e0e0e0"/><rect x="8" y="24" width="2" height="2" fill="#f2f2f2"/><rect x="9" y="25" width="1" height="1" fill="#e0e0e0"/><rect x="4" y="28" width="2" height="2" fill="#f2f2f2"/><rect x="5" y="29" width="1" height="1" fill="#e0e0e0"/><rect x="8" y="32" width="2" height="2" fill="#f2f2f2"/><rect x="9" y="33" width="1" height="1" fill="#e0e0e0"/></svg>
<div class="rr" style="left:931px;top:286px;width:73px;height:48px;border-width:4px;"></div>
<div class="hl" style="left:226px;top:505px;width:28px;"></div>
<div class="t" style="left:261.3px;top:497.0px;font-size:10.67px;line-height:14px;color:#000;font-weight:bold;letter-spacing:0.385px;">Vztahy</div>
<div class="hl" style="left:306px;top:505px;width:317px;"></div>
<div class="b  " style="left:623px;top:493px;width:69px;height:19px;line-height:17px;line-height:19px;"><u>A</u>ktualizace</div>
<div class="b  " style="left:703px;top:493px;width:61px;height:19px;line-height:17px;line-height:19px;"><u>P</u>ořízení</div>
<div class="hl" style="left:765px;top:505px;width:67px;"></div>
<div class="b  " style="left:833px;top:493px;width:100px;height:19px;line-height:17px;line-height:19px;">Ověřovací doložka</div>
<div class="t" style="left:231.2px;top:519.0px;font-size:10.67px;line-height:14px;color:#000;font-weight:bold;letter-spacing:-0.029px;">Ek.j.</div>
<div class="t" style="left:262.2px;top:519.0px;font-size:10.67px;line-height:14px;color:#000;font-weight:bold;letter-spacing:0.116px;">Číslo NS</div>
<div class="t" style="left:330.6px;top:519.0px;font-size:10.67px;line-height:14px;color:#000;font-weight:bold;letter-spacing:-0.066px;">Název NS</div>
<div class="t" style="left:442.7px;top:519.0px;font-size:10.67px;line-height:14px;color:#000;font-weight:bold;letter-spacing:0.329px;">Vztah</div>
<div class="t" style="left:483.3px;top:519.0px;font-size:10.67px;line-height:14px;color:#000;font-weight:bold;letter-spacing:0.214px;">Druh vztahu</div>
<div class="t" style="left:612.5px;top:519.0px;font-size:10.67px;line-height:14px;color:#000;font-weight:bold;letter-spacing:0.367px;">Identifikace</div>
<div class="t" style="left:708.3px;top:519.0px;font-size:10.67px;line-height:14px;color:#000;font-weight:bold;letter-spacing:0.491px;">Poznámka</div>
<div class="t" style="left:807px;top:519.0px;font-size:10.67px;line-height:14px;color:#000;font-weight:bold;letter-spacing:-0.008px;">Od</div>
<div class="t" style="left:870.5px;top:519.0px;font-size:10.67px;line-height:14px;color:#000;font-weight:bold;letter-spacing:-0.461px;">Do</div>
<div class="f " style="left:232px;top:538px;width:24px;height:17px;line-height:17px;background:#ebebeb;color:#000;">1</div>
<div class="f " style="left:259px;top:538px;width:69px;height:17px;line-height:17px;background:#bfe0ff;color:#000;">18103</div>
<div class="f " style="left:331px;top:538px;width:115px;height:17px;line-height:17px;background:#ebebeb;color:#000;">katedra číslicového návrhu</div>
<div class="f " style="left:448px;top:538px;width:25px;height:17px;line-height:17px;background:#ebebeb;color:#000;">ZAM</div>
<div class="f " style="left:475px;top:538px;width:133px;height:17px;line-height:17px;background:#bfe0ff;color:#000;">Hlavní pracovní poměr</div>
<div class="f " style="left:610px;top:538px;width:96px;height:17px;line-height:17px;background:#bfe0ff;color:#000;"></div>
<div class="f " style="left:709px;top:538px;width:97px;height:17px;line-height:17px;background:#bfe0ff;color:#000;"></div>
<div class="f " style="left:808px;top:538px;width:61px;height:17px;line-height:17px;background:#bfe0ff;color:#000;">01.02.2012</div>
<div class="f " style="left:871px;top:538px;width:61px;height:17px;line-height:17px;background:#bfe0ff;color:#000;">01.08.2013</div>
<div class="f " style="left:232px;top:557px;width:24px;height:17px;line-height:17px;background:#ebebeb;color:#000;">1</div>
<div class="f " style="left:259px;top:557px;width:69px;height:17px;line-height:17px;background:#ebebeb;color:#000;">18923</div>
<div class="f " style="left:331px;top:557px;width:115px;height:17px;line-height:17px;background:#ebebeb;color:#000;">studijní oddělení(18)</div>
<div class="f " style="left:448px;top:557px;width:25px;height:17px;line-height:17px;background:#ebebeb;color:#000;">ZAM</div>
<div class="f " style="left:475px;top:557px;width:133px;height:17px;line-height:17px;background:#ebebeb;color:#000;">Hlavní pracovní poměr</div>
<div class="f " style="left:610px;top:557px;width:96px;height:17px;line-height:17px;background:#ebebeb;color:#000;"></div>
<div class="f " style="left:709px;top:557px;width:97px;height:17px;line-height:17px;background:#ebebeb;color:#000;"></div>
<div class="f " style="left:808px;top:557px;width:61px;height:17px;line-height:17px;background:#ebebeb;color:#000;">01.09.2011</div>
<div class="f " style="left:871px;top:557px;width:61px;height:17px;line-height:17px;background:#ebebeb;color:#000;">01.12.2011</div>
<div class="f " style="left:232px;top:576px;width:24px;height:17px;line-height:17px;background:#ebebeb;color:#000;">1</div>
<div class="f " style="left:259px;top:576px;width:69px;height:17px;line-height:17px;background:#ebebeb;color:#000;">18923</div>
<div class="f " style="left:331px;top:576px;width:115px;height:17px;line-height:17px;background:#ebebeb;color:#000;">studijní oddělení(18)</div>
<div class="f " style="left:448px;top:576px;width:25px;height:17px;line-height:17px;background:#ebebeb;color:#000;">ZAM</div>
<div class="f " style="left:475px;top:576px;width:133px;height:17px;line-height:17px;background:#ebebeb;color:#000;">Hlavní pracovní poměr</div>
<div class="f " style="left:610px;top:576px;width:96px;height:17px;line-height:17px;background:#ebebeb;color:#000;"></div>
<div class="f " style="left:709px;top:576px;width:97px;height:17px;line-height:17px;background:#ebebeb;color:#000;"></div>
<div class="f " style="left:808px;top:576px;width:61px;height:17px;line-height:17px;background:#ebebeb;color:#000;">01.09.2011</div>
<div class="f " style="left:871px;top:576px;width:61px;height:17px;line-height:17px;background:#ebebeb;color:#000;">01.12.2011</div>
<div class="f " style="left:232px;top:595px;width:24px;height:17px;line-height:17px;background:#ebebeb;color:#000;"></div>
<div class="f " style="left:259px;top:595px;width:69px;height:17px;line-height:17px;background:#ebebeb;color:#000;"></div>
<div class="f " style="left:331px;top:595px;width:115px;height:17px;line-height:17px;background:#ebebeb;color:#000;"></div>
<div class="f " style="left:448px;top:595px;width:25px;height:17px;line-height:17px;background:#ebebeb;color:#000;"></div>
<div class="f " style="left:475px;top:595px;width:133px;height:17px;line-height:17px;background:#ebebeb;color:#000;"></div>
<div class="f " style="left:610px;top:595px;width:96px;height:17px;line-height:17px;background:#ebebeb;color:#000;"></div>
<div class="f " style="left:709px;top:595px;width:97px;height:17px;line-height:17px;background:#ebebeb;color:#000;"></div>
<div class="f " style="left:808px;top:595px;width:61px;height:17px;line-height:17px;background:#ebebeb;color:#000;"></div>
<div class="f " style="left:871px;top:595px;width:61px;height:17px;line-height:17px;background:#ebebeb;color:#000;"></div>
<div class="a" style="left:939px;top:545px;width:12px;height:62px;background:#c9c9c9;border-left:1px solid #f0f0f0;border-right:1px solid #bdbdbd;box-sizing:border-box;"></div>
<svg class="a" style="left:938px;top:537px" width="14" height="15" viewBox="0 0 14 15"><path d="M0.500 14.500V6.500a6.500 6 0 0 1 13 0V14.500z" fill="#d8d8d8" stroke="#6f7f9e" stroke-width="1"/><path d="M1.500 14V6.500a5.500 5 0 0 1 3 -4.500" fill="none" stroke="#f6f6f6" stroke-width="1"/><path d="M3 10h8l-4-4z" fill="#566a8c"/></svg>
<svg class="a" style="left:938px;top:600px" width="14" height="15" viewBox="0 0 14 15"><path d="M0.500 14.500V6.500a6.500 6 0 0 1 13 0V14.500z" fill="#d8d8d8" stroke="#6f7f9e" stroke-width="1" transform="rotate(180 7 7.500)"/><path d="M1.500 14V6.500a5.500 5 0 0 1 3 -4.500" fill="none" stroke="#f6f6f6" stroke-width="1" transform="rotate(180 7 7.500)"/><path d="M3 5h8l-4 4z" fill="#566a8c"/></svg>
<svg class="a" style="left:938px;top:571px" width="14" height="12"><rect x="8" y="0" width="2" height="2" fill="#f2f2f2"/><rect x="9" y="1" width="1" height="1" fill="#e0e0e0"/><rect x="4" y="4" width="2" height="2" fill="#f2f2f2"/><rect x="5" y="5" width="1" height="1" fill="#e0e0e0"/><rect x="8" y="8" width="2" height="2" fill="#f2f2f2"/><rect x="9" y="9" width="1" height="1" fill="#e0e0e0"/></svg>
<div class="a" style="left:225px;top:614px;width:921px;height:10px;background:#dddddd;"></div>
</div></div>
</body></html>
